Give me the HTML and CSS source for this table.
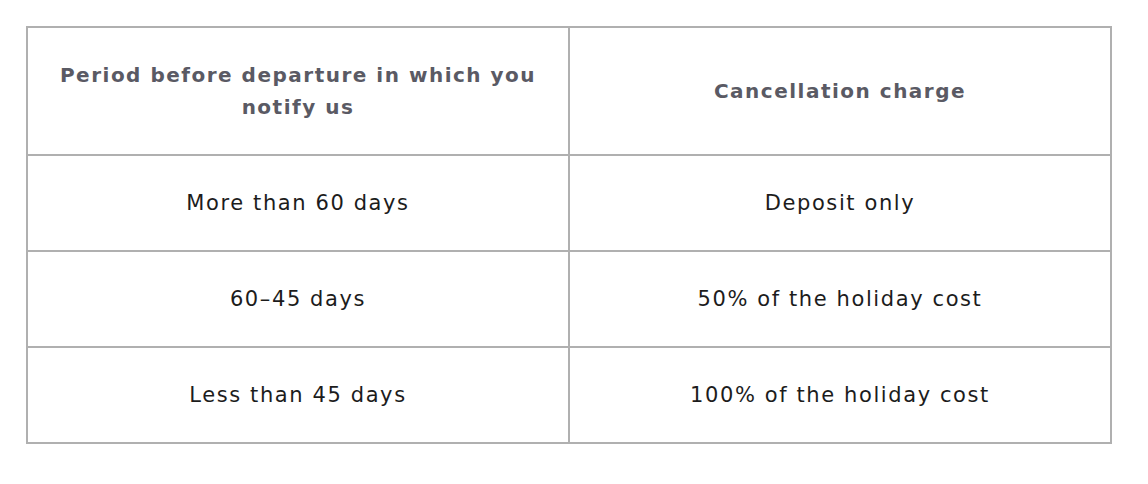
FILE: index.html
```html
<!DOCTYPE html>
<html lang="en">
<head>
<meta charset="utf-8">
<title>Cancellation charges</title>
<link rel="stylesheet" href="styles.css">
</head>
<body>
<div class="page">
  <table class="charges">
    <thead>
      <tr>
        <th>Period before departure in which you<br>notify us</th>
        <th>Cancellation charge</th>
      </tr>
    </thead>
    <tbody>
      <tr>
        <td>More than 60 days</td>
        <td>Deposit only</td>
      </tr>
      <tr>
        <td>60–45 days</td>
        <td>50% of the holiday cost</td>
      </tr>
      <tr>
        <td>Less than 45 days</td>
        <td>100% of the holiday cost</td>
      </tr>
    </tbody>
  </table>
</div>
</body>
</html>
```

FILE: styles.css
```css
html, body {
  margin: 0;
  padding: 0;
  background: #ffffff;
}

.page {
  padding: 26px 0 0 26px;
}

.charges {
  border-collapse: collapse;
  width: 1086px;
  table-layout: fixed;
  font-family: "DejaVu Sans", "Open Sans", sans-serif;
}

.charges th,
.charges td {
  border: 2px solid #b0b0b0;
  text-align: center;
  vertical-align: middle;
  padding: 0 10px;
}

.charges th {
  height: 126px;
  font-size: 20px;
  font-weight: 700;
  line-height: 32px;
  color: #5a5a64;
  letter-spacing: 1.5px;
}

.charges td {
  height: 94px;
  font-size: 21px;
  font-weight: 400;
  line-height: 28px;
  color: #1c1c1c;
  letter-spacing: 1.6px;
}
```
